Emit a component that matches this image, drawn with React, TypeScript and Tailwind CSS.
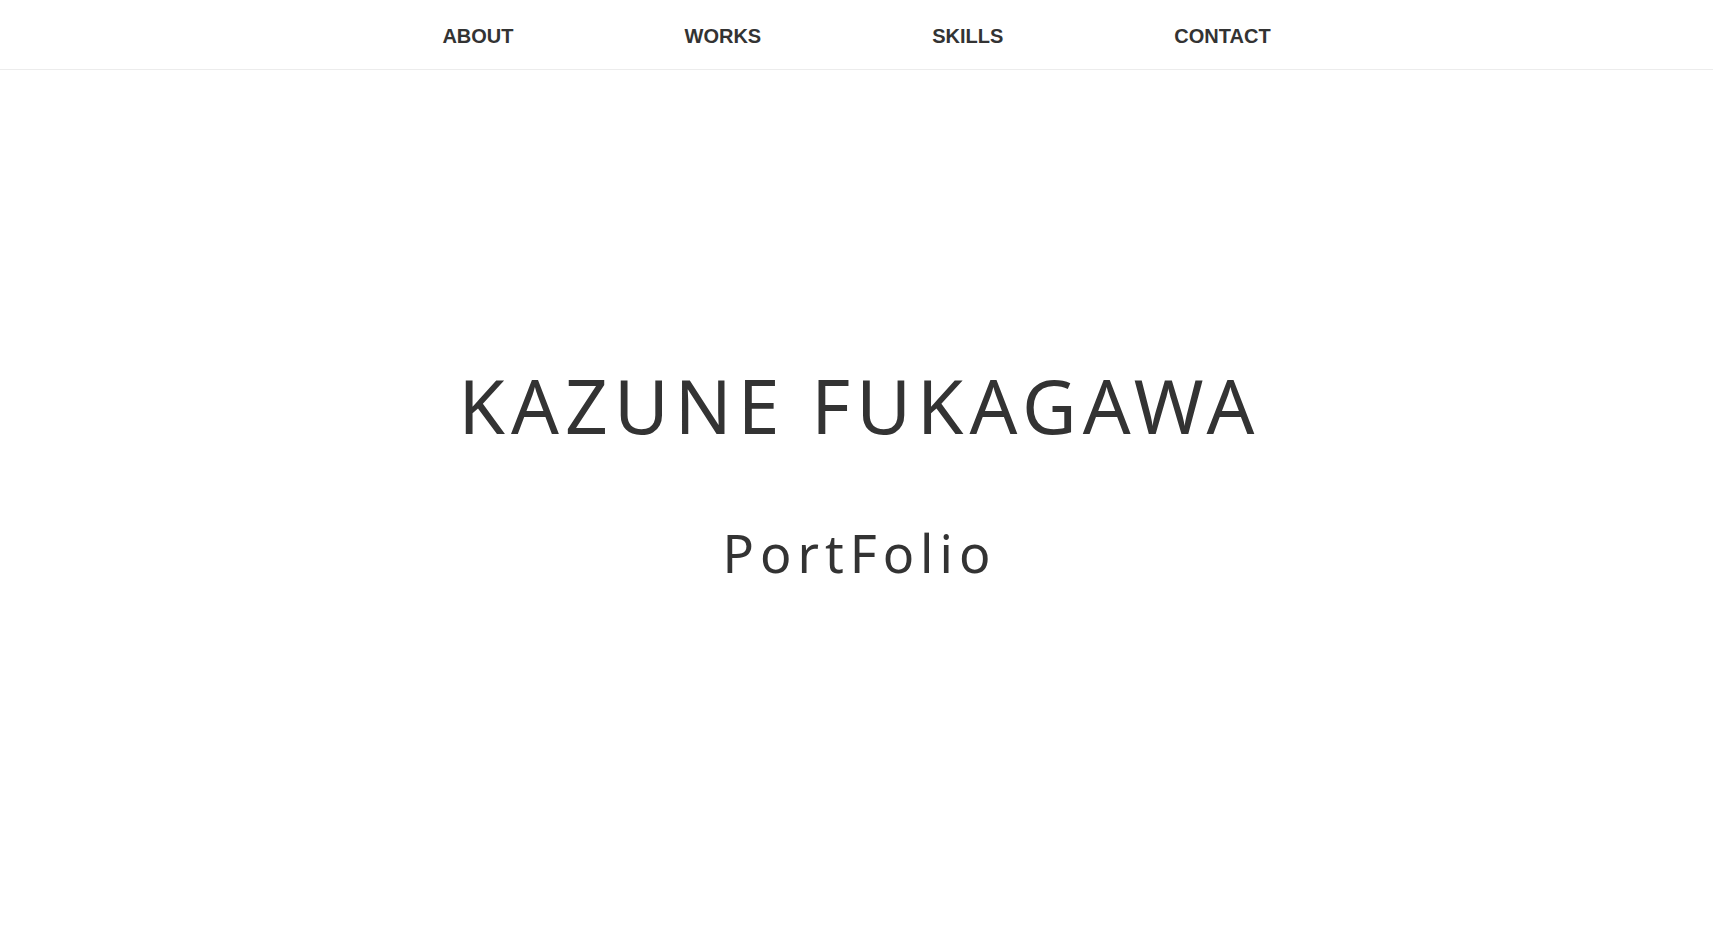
export default function App() {
    const navItems = ['ABOUT', 'WORKS', 'SKILLS', 'CONTACT'];

    return (
        <div className="min-h-screen bg-white text-[#333333]">
            <header className="h-[70px] border-b border-[#ececec] flex items-center justify-center">
                <nav className="flex flex-row gap-[171px] pt-[2px]">
                    {navItems.map((item) => (
                        <a key={item} href="#" className="font-['Liberation_Sans',Arial,sans-serif] font-bold text-[20px] leading-none text-[#333333]">
                            {item}
                        </a>
                    ))}
                </nav>
            </header>
            <main className="flex flex-col items-center pt-[298px] font-['Noto_Sans',sans-serif] font-normal">
                <h1 className="text-[75px] leading-none tracking-[0.081em] pl-[0.081em]">
                    KAZUNE FUKAGAWA
                </h1>
                <p className="mt-[84px] text-[52px] leading-none tracking-[0.115em] pl-[0.115em]">
                    PortFolio
                </p>
            </main>
        </div>
    );
}
